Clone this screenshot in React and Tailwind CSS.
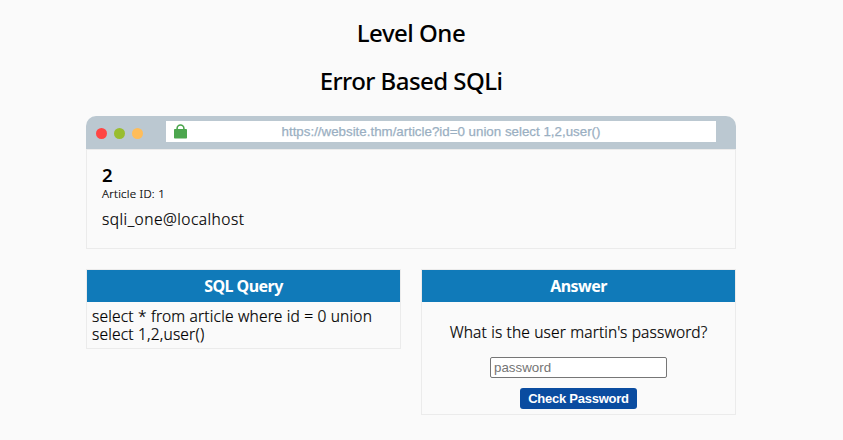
import React from "react";

function BrowserBar({ url }) {
  return (
    <div className="flex h-[33px] rounded-t-[10px] bg-[#bbc8d1] pt-[5px] pl-[10px]">
      <div className="flex w-[70px] gap-[7px] pt-[7px]">
        <span className="size-[11px] rounded-full bg-[#ff4544]" />
        <span className="size-[11px] rounded-full bg-[#99bd2f]" />
        <span className="size-[11px] rounded-full bg-[#ffbd59]" />
      </div>
      <div className="flex h-[21px] w-[550px] bg-white pl-2">
        <svg className="mt-[3px] h-[15px] w-[13px] shrink-0" viewBox="0 0 13 15">
          <path d="M3.1 6V4.4a3.4 3.4 0 0 1 6.8 0V6" fill="none" stroke="#4ca64e" strokeWidth="1.6" />
          <rect y="5" width="13" height="9.5" rx="0.8" fill="#4ca64e" />
        </svg>
        <div className="flex-1 pr-[21px] text-center font-['Liberation_Sans',Arial,sans-serif] text-[13.333px] leading-[21px] text-[#9aafc2] [-webkit-text-stroke:0.25px_#9aafc2]">
          {url}
        </div>
      </div>
    </div>
  );
}

function Panel({ title, children }) {
  return (
    <section className="w-[315px] border border-[#ebebeb]">
      <h3 className="h-8 bg-[#107ab9] text-center text-base leading-[33px] font-bold tracking-[-0.55px] text-white">
        {title}
      </h3>
      {children}
    </section>
  );
}

export default function App() {
  return (
    <main className="h-[440px] w-[843px] overflow-hidden bg-[#fafafa] pl-[86px] font-['Noto_Sans',sans-serif] text-black">
      <div className="w-[650px]">
        <h1 className="pt-[18px] text-center text-[24px] leading-[30px] font-medium tracking-[-0.5px]">Level One</h1>
        <h2 className="mt-[18px] text-center text-[24px] leading-[30px] font-medium tracking-[-0.55px]">Error Based SQLi</h2>
        <div className="mt-5">
          <BrowserBar url="https://website.thm/article?id=0 union select 1,2,user()" />
          <article className="h-[100px] border border-[#ebebeb] px-[15px] pt-[15px]">
            <h3 className="text-[18.5px] leading-[20px] font-semibold">2</h3>
            <p className="mt-[2px] text-[11.5px] leading-[14px] font-light tracking-[0.25px] [-webkit-text-stroke:0.2px_#000]">Article ID: 1</p>
            <p className="mt-[9px] text-[15.5px] leading-[18px] font-light tracking-[0.47px] [-webkit-text-stroke:0.2px_#000]">sqli_one@localhost</p>
          </article>
        </div>
        <div className="mt-5 flex items-start justify-between">
          <Panel title="SQL Query">
            <p className="h-[46px] px-[5px] pt-[5px] text-[15.5px] leading-[18px] font-light tracking-[0.19px] whitespace-nowrap [-webkit-text-stroke:0.2px_#000]">
              select * from article where id = 0 union
              <br />
              select 1,2,user()
            </p>
          </Panel>
          <Panel title="Answer">
            <form className="flex h-28 flex-col items-center pt-[21px]">
              <label className="text-[15.5px] leading-[18px] font-light tracking-[0.15px] whitespace-nowrap [-webkit-text-stroke:0.2px_#000]">What is the user martin's password?</label>
              <input
                className="mt-4 h-[21px] w-[177px] rounded-[2px] border border-[#767676] bg-white px-[3px] font-['Liberation_Sans',Arial,sans-serif] text-[13.333px] placeholder:text-[#757575]"
                placeholder="password"
              />
              <button
                type="button"
                className="mt-[10px] h-[21px] w-[117px] rounded-[3px] bg-[#0a4ca0] font-['Liberation_Sans',Arial,sans-serif] text-[13px] leading-[21px] font-bold tracking-[-0.25px] whitespace-nowrap text-white"
              >
                Check Password
              </button>
            </form>
          </Panel>
        </div>
      </div>
    </main>
  );
}
